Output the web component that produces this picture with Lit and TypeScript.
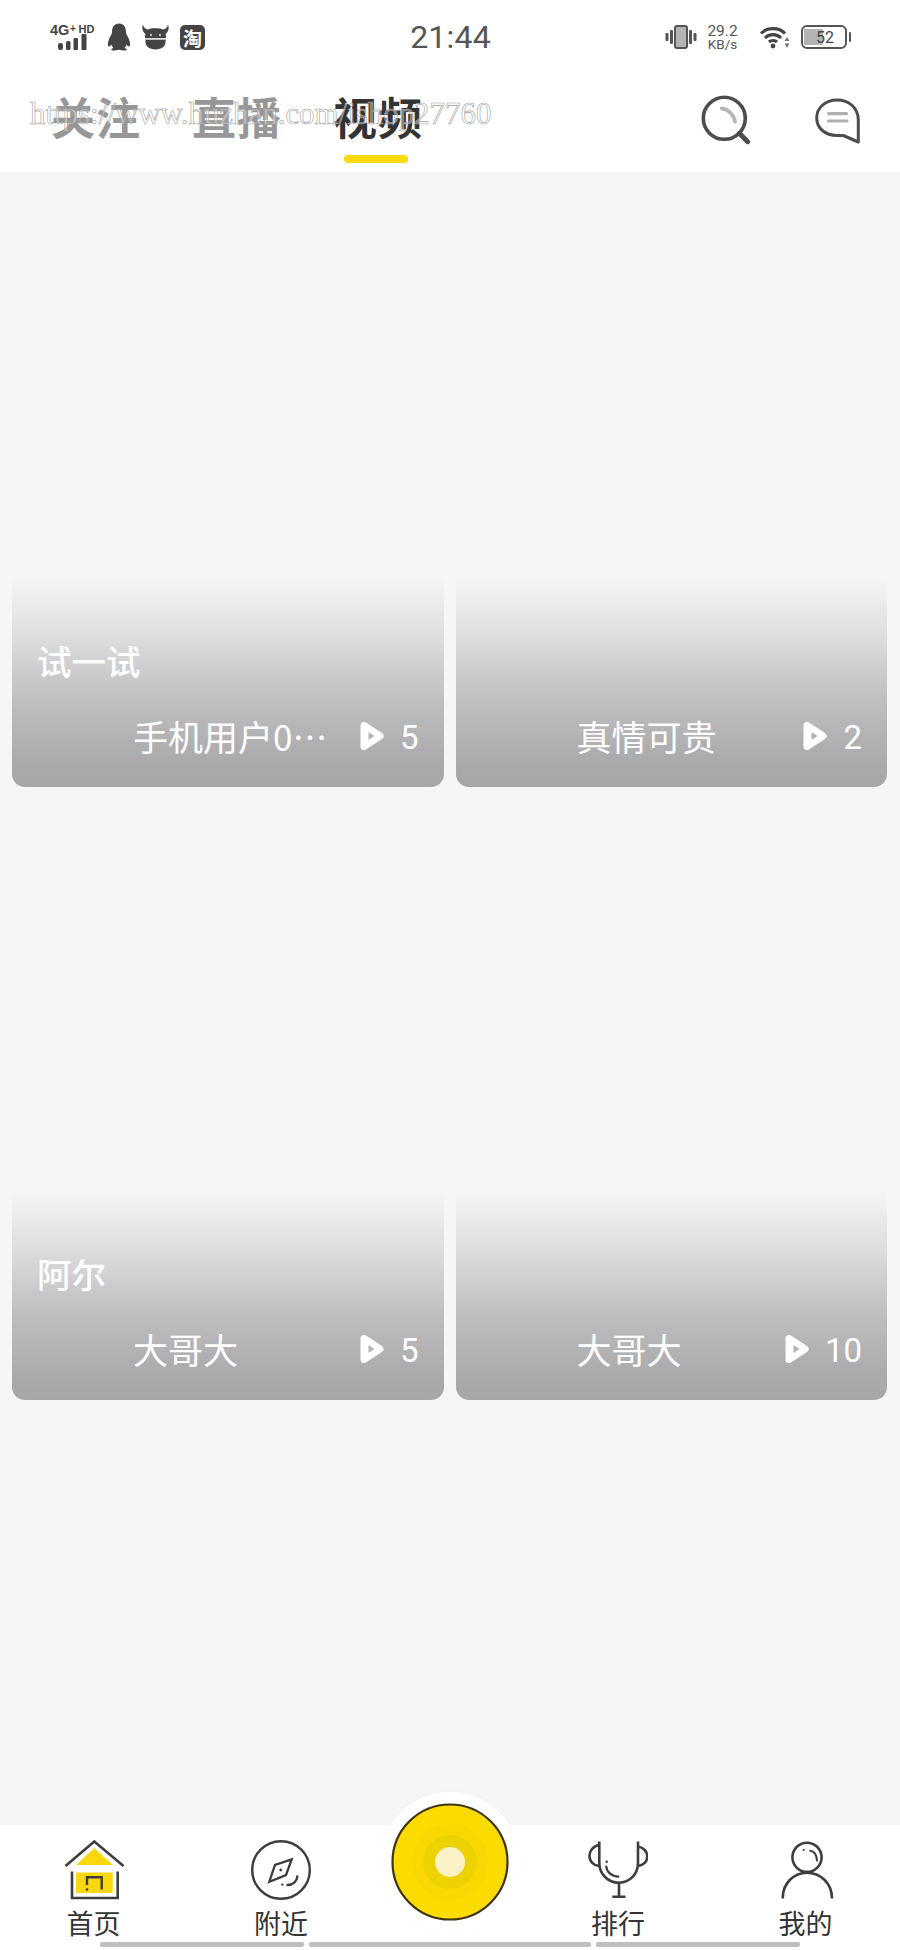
import { LitElement, html, css, svg } from "lit";
import { customElement } from "lit/decorators.js";

const videos = [
  { title: "试一试", owner: "手机用户0…", count: 5 },
  { title: "", owner: "真情可贵", count: 2 },
  { title: "阿尔", owner: "大哥大", count: 5 },
  { title: "", owner: "大哥大", count: 10 },
];

const homeIcon = svg`
  <path d="M12 25 L30.3 8 L49 25 Z" fill="#fbd80e"/>
  <rect x="12" y="32.5" width="36.7" height="20.5" fill="#fbd80e"/>
  <path d="M1.5 26 L30.3 1.5 L59.5 26" fill="none" stroke="#3d3d3d" stroke-width="2.6"/>
  <path d="M8 31.5 V58 H53.7 V31.5" fill="none" stroke="#3d3d3d" stroke-width="2.6"/>
  <path d="M23 45 V37.3 H37.7 V49.5" fill="none" stroke="#3d3d3d" stroke-width="2.4"/>
  <circle cx="23" cy="49.5" r="1.3" fill="#3d3d3d"/>`;
const compassIcon = svg`
  <circle cx="30" cy="30" r="28.8" fill="none" stroke="#3d3d3d" stroke-width="2.4"/>
  <path d="M40.7 19.3 L24 25 L18.3 41.7 L35 35 Z" fill="none" stroke="#3d3d3d" stroke-width="2.3" stroke-linejoin="miter"/>
  <circle cx="29.7" cy="30" r="1.4" fill="#3d3d3d"/>
  <path d="M46.3 36.5 C46 41.5 42 45 36.5 45" fill="none" stroke="#3d3d3d" stroke-width="2.4" stroke-linecap="round"/>
  <circle cx="31.3" cy="44.6" r="1.2" fill="#3d3d3d"/>`;
const trophyIcon = svg`
  <g fill="none" stroke="#3d3d3d" stroke-width="2.6">
    <path d="M11.3 1.5 V23 C11.3 34 20 42.7 31 42.7 C42 42.7 50 34 50 23 V1.5"/>
    <path d="M11.3 5 C5 6 1.5 11 1.5 16 C1.5 21.5 5.5 25.5 11.3 26"/>
    <path d="M50 6.5 C55.5 7.5 59.3 11.5 59.3 16.5 C59.3 21.5 55.5 25.5 50 26"/>
    <path d="M31 42.7 V56.7 M24.3 56.7 H37.5"/>
    <path d="M18.3 26.5 C18.5 31.5 23.5 36.5 30.3 36.7" stroke-width="2.2" stroke-linecap="round"/>
  </g>
  <circle cx="18.7" cy="21.7" r="1.2" fill="#3d3d3d"/>`;
const personIcon = svg`
  <g fill="none" stroke="#3d3d3d" stroke-width="2.6">
    <circle cx="31" cy="17.3" r="14.6"/>
    <path d="M6.7 58.5 C6.7 43 18 32.7 31 32.7 C44 32.7 56 43 56 58.5"/>
    <path d="M34.3 10.7 C38 11.2 40.6 15 41 20.5" stroke-width="2.1" stroke-linecap="round"/>
  </g>
  <circle cx="27.7" cy="10" r="1.1" fill="#3d3d3d"/>`;

const tabs = [
  { label: "首页", icon: homeIcon },
  { label: "附近", icon: compassIcon },
  null,
  { label: "排行", icon: trophyIcon },
  { label: "我的", icon: personIcon },
];

@customElement("app-root")
export class AppRoot extends LitElement {
  static styles = css`
    :host {
      display: block;
      width: 900px;
      height: 1950px;
      font-family: "Noto Sans CJK SC", "Liberation Sans", sans-serif;
    }
    .page {
      width: 900px;
      height: 1950px;
      display: flex;
      flex-direction: column;
      background: #f6f6f9;
      overflow: hidden;
    }
    .header {
      position: relative;
      height: 172px;
      background: #fff;
      flex: none;
    }
    .status {
      height: 70px;
      display: grid;
      grid-template-columns: 1fr auto 1fr;
      align-items: center;
      padding: 4px 49px 0 50px;
      box-sizing: border-box;
    }
    .status-left {
      display: flex;
      align-items: center;
      gap: 11px;
    }
    .status-right {
      display: flex;
      align-items: center;
      justify-content: flex-end;
    }
    .time {
      font-family: Roboto, "Liberation Sans", sans-serif;
      font-size: 32px;
      line-height: 38px;
      color: #555;
      letter-spacing: 0.2px;
    }
    .status svg {
      display: block;
      flex: none;
    }
    .tao {
      width: 25px;
      height: 25px;
      border-radius: 5px;
      background: #444;
      color: #fff;
      font-size: 19px;
      font-weight: 700;
      line-height: 25px;
      text-align: center;
    }
    .speed {
      margin: 0 21px 0 9px;
      width: 33px;
      display: flex;
      flex-direction: column;
      align-items: center;
      color: #555;
      font-family: Roboto, "Liberation Sans", sans-serif;
    }
    .speed b {
      font-weight: 400;
      font-size: 15.5px;
      line-height: 14px;
    }
    .speed span {
      font-size: 13.5px;
      line-height: 13px;
    }
    .battery {
      position: relative;
      margin-left: 11px;
      width: 46px;
      height: 24px;
      box-sizing: border-box;
      border: 2px solid #555;
      border-radius: 6px;
      display: flex;
      align-items: center;
      justify-content: center;
      font-family: Roboto, "Liberation Sans", sans-serif;
      font-size: 16px;
      color: #444;
      margin-right: 4px;
    }
    .battery i {
      position: absolute;
      left: 1px;
      top: 2px;
      bottom: 2px;
      width: 19px;
      background: #b4b4b4;
    }
    .battery span {
      position: relative;
      margin-left: 2px;
    }
    .battery::after {
      content: "";
      position: absolute;
      right: -6px;
      top: 5px;
      width: 2px;
      height: 10px;
      background: #555;
      border-radius: 1px;
    }
    .nav {
      height: 102px;
      display: flex;
      padding-left: 51px;
      gap: 51px;
      position: relative;
    }
    .nav-tab {
      position: relative;
      font-size: 44px;
      font-weight: 700;
      line-height: 60px;
      height: 60px;
      margin-top: 16px;
      color: #979797;
      letter-spacing: 1px;
    }
    .nav-tab.active {
      color: #333;
    }
    .nav-tab.active::after {
      content: "";
      position: absolute;
      left: 11px;
      width: 64px;
      top: 69px;
      height: 8px;
      border-radius: 4px;
      background: #fbdb0d;
    }
    .nav-actions {
      position: absolute;
      left: 699px;
      top: 22px;
      display: flex;
      gap: 59px;
    }
    .nav-actions svg {
      display: block;
    }
    .comment {
      margin-top: 4px;
    }
    .watermark {
      position: absolute;
      left: 30px;
      top: 96px;
      font-family: "Liberation Serif", serif;
      font-size: 30.9px;
      line-height: 36px;
      white-space: nowrap;
      color: rgba(255, 255, 255, 0.4);
      -webkit-text-stroke: 0.6px #a0a0a0;
    }
    .grid {
      flex: 1;
      display: grid;
      grid-template-columns: 1fr 1fr;
      grid-auto-rows: 600px;
      gap: 13px 12px;
      padding: 15px 13px 0 12px;
      align-content: start;
    }
    .card {
      border-radius: 13px;
      background: linear-gradient(
        to bottom,
        rgba(0, 0, 0, 0) 65%,
        rgba(0, 0, 0, 0.1) 75%,
        rgba(0, 0, 0, 0.22) 85%,
        rgba(0, 0, 0, 0.31) 96%,
        rgba(0, 0, 0, 0.32) 100%
      );
      display: flex;
      flex-direction: column;
      justify-content: flex-end;
      color: #fff;
      padding: 0 25px 29px 25px;
    }
    .title {
      font-size: 34.5px;
      font-weight: 500;
      line-height: 44px;
      margin-bottom: 32px;
    }
    .meta {
      display: flex;
      align-items: center;
      height: 44px;
      padding-left: 96px;
      font-size: 35px;
      line-height: 44px;
    }
    .owner {
      flex: 1;
      white-space: nowrap;
    }
    .play {
      display: block;
      margin-right: 16px;
      margin-top: -1px;
    }
    .count {
      font-family: Roboto, "Liberation Sans", sans-serif;
      font-size: 33px;
      font-weight: 400;
      margin-top: 4px;
    }
    .tabbar {
      position: relative;
      height: 125px;
      flex: none;
      background: #fff;
      display: grid;
      grid-template-columns: 187px 188px 150px 186px 189px;
    }
    .tab {
      display: flex;
      flex-direction: column;
      align-items: center;
      padding-top: 15px;
    }
    .tab svg {
      display: block;
    }
    .tab span {
      margin-top: 8px;
      font-size: 27px;
      line-height: 30px;
      color: #333;
    }
    .center {
      position: absolute;
      left: 380px;
      top: -33px;
      width: 140px;
      height: 140px;
      border-radius: 50%;
      background: #fff;
      box-shadow: 0 0 6px rgba(0, 0, 0, 0.02);
    }
    .center svg {
      display: block;
    }
    .gesture {
      position: absolute;
      left: 100px;
      bottom: 3px;
      display: flex;
      gap: 5px;
    }
    .gesture i {
      display: block;
      height: 5px;
      background: #bfbfbf;
      border-radius: 2px;
    }
    .g1 { width: 204px; }
    .g2 { width: 282px; }
  `;

  render() {
    return html`
      <div class="page">
        <div class="header">
          <div class="status">
            <div class="status-left">
              <svg width="46" height="30" viewBox="0 0 46 30">
                <text x="0" y="13" font-family="Liberation Sans" font-weight="700" font-size="14.5" fill="#444">4G</text>
                <text x="20" y="10" font-family="Liberation Sans" font-weight="700" font-size="10" fill="#444">+</text>
                <text x="28.5" y="10.5" font-family="Liberation Sans" font-weight="700" font-size="11" fill="#444">HD</text>
                <g fill="#444">
                  <rect x="8" y="21" width="5" height="7" rx="2.2"/>
                  <rect x="16" y="19" width="4.5" height="9" rx="1.5"/>
                  <rect x="23.5" y="16" width="4.5" height="12" rx="1"/>
                  <rect x="31.5" y="12" width="5" height="16" rx="1"/>
                </g>
              </svg>
              <svg width="24" height="28" viewBox="0 0 24 28">
                <path fill="#444" d="M12 0.5 C17 0.5 19 4.5 19 9 C19 11 20 12 21.5 15 C23.5 19.5 23.5 23 22 23.5 C21 23.7 20 22.5 19.5 21.5 C19 23 18.5 24 17.5 25 C19.5 25.5 20 26.5 19.5 27 C18 28 15 27.7 12 26.8 C9 27.7 6 28 4.5 27 C4 26.5 4.5 25.5 6.5 25 C5.5 24 5 23 4.5 21.5 C4 22.5 3 23.7 2 23.5 C0.5 23 0.5 19.5 2.5 15 C4 12 5 11 5 9 C5 4.5 7 0.5 12 0.5 Z"/>
              </svg>
              <svg width="27" height="26" viewBox="0 0 27 26">
                <path fill="#444" d="M1 0.5 C1.5 3.5 3.5 5 6 5.5 C8.5 3.8 18.5 3.8 21 5.5 C23.5 5 25.5 3.5 26 0.5 C27.5 4 26.5 8 23.5 10 C24.5 12 24 15 23.5 17 C24 22 20 25.5 13.5 25.5 C7 25.5 3 22 3.5 17 C3 15 2.5 12 3.5 10 C0.5 8 -0.5 4 1 0.5 Z"/>
                <rect x="3" y="14" width="21" height="1.8" fill="#ddd"/>
                <circle cx="9" cy="11" r="1.2" fill="#bbb"/>
                <circle cx="18" cy="11" r="1.2" fill="#bbb"/>
              </svg>
              <div class="tao">淘</div>
            </div>
            <div class="time">21:44</div>
            <div class="status-right">
              <svg width="32" height="24" viewBox="0 0 32 24">
                <g fill="#555">
                  <rect x="0.5" y="8" width="3" height="8" rx="1"/>
                  <rect x="5" y="5" width="3" height="14" rx="1"/>
                  <rect x="24" y="5" width="3" height="14" rx="1"/>
                  <rect x="28.5" y="8" width="3" height="8" rx="1"/>
                </g>
                <rect x="10" y="1" width="12" height="22" rx="2" fill="#b4b4b4" stroke="#555" stroke-width="2"/>
              </svg>
              <div class="speed"><b>29.2</b><span>KB/s</span></div>
              <svg width="30" height="24" viewBox="0 0 30 24">
                <g fill="none" stroke="#444" stroke-width="3.2">
                  <path d="M1 8.5 C7 2 19 2 25 8.5"/>
                  <path d="M5 13 C9 8.5 17 8.5 21 13"/>
                  <path d="M9 17 C11 15 15 15 17 17"/>
                </g>
                <circle cx="13" cy="21" r="2.4" fill="#444"/>
                <path d="M27 12 L29.5 16 H24.5 Z M27 23 L24.5 18.5 H29.5 Z" fill="#777"/>
              </svg>
              <div class="battery"><i></i><span>52</span></div>
            </div>
          </div>
          <div class="nav">
            <div class="nav-tab">关注</div>
            <div class="nav-tab">直播</div>
            <div class="nav-tab active">视频</div>
            <div class="nav-actions">
              <svg width="54" height="54" viewBox="0 0 54 54" fill="none">
                <circle cx="25.3" cy="26.3" r="21" stroke="#4d4d4d" stroke-width="3.6"/>
                <path d="M40.3 41.3 L48.7 49.7" stroke="#4d4d4d" stroke-width="5" stroke-linecap="round"/>
                <path d="M22.7 16.3 C29 17 35 23 36 29.7" stroke="#b5b5b5" stroke-width="3.8" stroke-linecap="round"/>
              </svg>
              <svg class="comment" width="50" height="50" viewBox="0 0 50 50" fill="none">
                <path d="M31.3 39.5 H25 C13 39.5 4.7 32 4.7 22 C4.7 12 13 4 25 4 C37 4 46.3 12 46.3 24 V46 Z" stroke="#4d4d4d" stroke-width="3" stroke-linejoin="round"/>
                <path d="M16.5 17.7 H34.5 M16.5 25 H35" stroke="#b0b0b0" stroke-width="3.2" stroke-linecap="round"/>
              </svg>
            </div>
          </div>
          <div class="watermark">https://www.huzhan.com/ishop27760</div>
        </div>
        <div class="grid">
          ${videos.map(
            (v) => html`
              <div class="card">
                ${v.title ? html`<div class="title">${v.title}</div>` : ""}
                <div class="meta">
                  <div class="owner">${v.owner}</div>
                  <svg class="play" width="24" height="30" viewBox="0 0 24 30">
                    <path d="M4 4.5 V25.5 L20 15 Z" fill="#fff" stroke="#fff" stroke-width="7" stroke-linejoin="round"/>
                    <path d="M8.5 11 V19 L14.5 15 Z" fill="#b4b4b6"/>
                  </svg>
                  <div class="count">${v.count}</div>
                </div>
              </div>
            `
          )}
        </div>
        <div class="tabbar">
          ${tabs.map((t) =>
            t
              ? html`<div class="tab">
                  <svg width="60" height="60" viewBox="0 0 60 60">${t.icon}</svg>
                  <span>${t.label}</span>
                </div>`
              : html`<div></div>`
          )}
          <div class="center">
            <svg width="140" height="140" viewBox="0 0 140 140">
              <circle cx="70" cy="70" r="57.5" fill="#fcdb00" stroke="#3d3410" stroke-width="2.2"/>
              <circle cx="70" cy="70" r="38" fill="#f8d800"/>
              <circle cx="70" cy="70" r="27" fill="#ecd200"/>
              <circle cx="70" cy="70" r="15" fill="#fbf3c8"/>
            </svg>
          </div>
          <div class="gesture"><i class="g1"></i><i class="g2"></i><i class="g1"></i></div>
        </div>
      </div>
    `;
  }
}
